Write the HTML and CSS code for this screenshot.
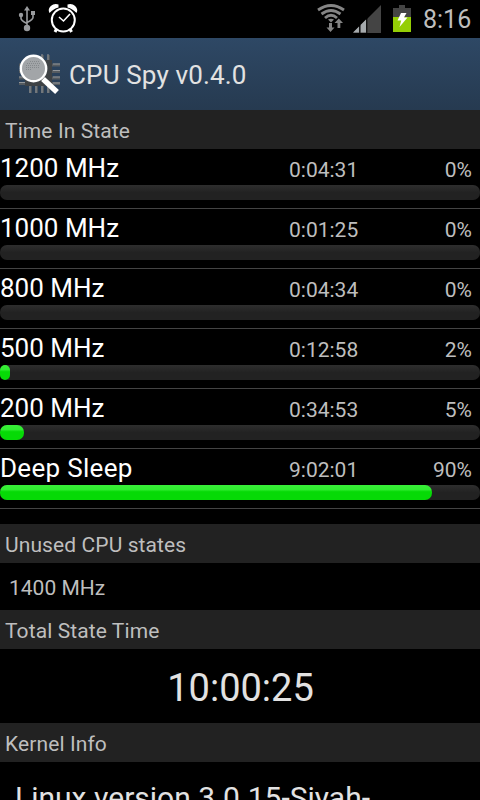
FILE: index.html
```html
<!DOCTYPE html>
<html lang="en">
<head>
    <meta charset="UTF-8">
    <meta name="viewport" content="width=device-width, initial-scale=1.0">
    <title>CPU Spy</title>
    <link rel="stylesheet" href="styles.css">
</head>
<body>
    <!-- Status bar -->
    <div class="status-bar">
        <svg class="icon-usb" width="18" height="26" viewBox="0 0 18 26">
            <g fill="none" stroke="#999b9e" stroke-width="1.600">
                <path d="M9 3v19M3 9v3.500q0 2 6 5M15 8v3.500q0 2-6 5"/>
            </g>
            <g fill="#999b9e">
                <path d="M9 0l3 4.500H6z"/>
                <circle cx="9" cy="22" r="3.200"/>
                <circle cx="3" cy="9" r="2.200"/>
                <path d="M13 5h4v4h-4z"/>
            </g>
        </svg>
        <svg class="icon-alarm" width="30" height="30" viewBox="0 0 30 30">
            <g fill="none" stroke="#fff">
                <circle cx="15.300" cy="17" r="11.500" stroke-width="2"/>
                <path d="M11 14l4.500 4 6.500-7" stroke-width="1.600"/>
                <path d="M8.500 26l-1.500 3M22 26l1.500 3" stroke-width="3"/>
            </g>
            <g fill="#fff">
                <path d="M1.500 10C-1.500 5 5-1 10.500 1.500V4.500C7 5.500 4.500 7 1.500 10z"/>
                <path d="M28.500 10c3-5-3.500-11-9-8.500V4.500c3.500 1 6 2.500 9 5.500z"/>
            </g>
        </svg>
        <span class="spacer"></span>
        <svg class="icon-wifi" width="28" height="29" viewBox="0 0 28 29">
            <g fill="none" stroke="#858585" stroke-width="2.800">
                <path d="M1 6Q14-3 27 6"/>
                <path d="M4.500 10Q14 3 23.500 10"/>
                <path d="M8 14Q14 8.500 20 14"/>
            </g>
            <g fill="#858585">
                <path d="M11 15.500q3-1.500 6 0L14 18.500z"/>
                <path d="M12 19h3v4.500h2.500l-4 4.500-4-4.500H12zM20.500 24v-5H17.500l4.300-4.500 4.200 4.500h-2.700v5z"/>
            </g>
        </svg>
        <svg class="icon-signal" width="28" height="28" viewBox="0 0 28 28">
            <path fill="#444" d="M0 28L28 0v28z"/>
            <path fill="#a5aaad" d="M0 27.500L6 21.500v6zM7.500 20L13 14.500v13H7.500z"/>
            <path stroke="#000" d="M6.800 20v8M13.800 13v15"/>
        </svg>
        <svg class="icon-battery" width="18" height="27" viewBox="0 0 18 27">
            <path fill="#444" d="M6 0h6v3h6v9H0V3h6z"/>
            <path fill="#94ce05" d="M0 12h18v15H0z"/>
            <path fill="#fff" d="M8 8h5.500L11 12.500h3.500L6.500 22l1.700-6.500H4.500z"/>
        </svg>
        <span class="clock">8:16</span>
    </div>

    <!-- Action bar -->
    <div class="action-bar">
        <svg class="app-icon" width="44" height="44" viewBox="0 0 44 44">
            <path fill="none" stroke="#555b60" stroke-width="2.800" d="M13.500 3v38M19.500 3v38M25.500 3v38M31.500 3v38M2 13h41M2 19.500h41M2 26h41M2 31.500h41"/>
            <path fill="none" stroke="#92969a" d="M31 2v6M25 2v6M36 12h7M36 18.500h7M36 25h7M36 31h7M2 30.500h8M2 25h6M13 34v7M19 34v7M25 34v7M31 34v7"/>
            <path fill="#3e4245" d="M8 8h27v26H8z"/>
            <path stroke="#fff" stroke-width="5.500" d="M26 27l14 13"/>
            <circle cx="16.500" cy="16.500" r="12.700" fill="#a2a5a8" stroke="#fff" stroke-width="2.400"/>
            <path fill="none" stroke="#85898c" stroke-dasharray="1 1" d="M13 9.500h9M10 11.500h13M9 13.500h14M9 15.500h13M9 17.500h6"/>
        </svg>
        <h1>CPU Spy v0.4.0</h1>
    </div>

    <h2>Time In State</h2>
    <div class="state-list">
        <div class="state">
            <div class="state-info"><span class="name">1200 MHz</span><span class="time">0:04:31</span><span class="percent">0%</span></div>
            <div class="bar"></div>
        </div>
        <div class="state">
            <div class="state-info"><span class="name">1000 MHz</span><span class="time">0:01:25</span><span class="percent">0%</span></div>
            <div class="bar"></div>
        </div>
        <div class="state">
            <div class="state-info"><span class="name">800 MHz</span><span class="time">0:04:34</span><span class="percent">0%</span></div>
            <div class="bar"></div>
        </div>
        <div class="state">
            <div class="state-info"><span class="name">500 MHz</span><span class="time">0:12:58</span><span class="percent">2%</span></div>
            <div class="bar"><div class="fill" style="width: 2%"></div></div>
        </div>
        <div class="state">
            <div class="state-info"><span class="name">200 MHz</span><span class="time">0:34:53</span><span class="percent">5%</span></div>
            <div class="bar"><div class="fill" style="width: 5%"></div></div>
        </div>
        <div class="state">
            <div class="state-info"><span class="name deep-sleep">Deep Sleep</span><span class="time">9:02:01</span><span class="percent">90%</span></div>
            <div class="bar"><div class="fill" style="width: 90%"></div></div>
        </div>
    </div>

    <h2>Unused CPU states</h2>
    <p class="unused">1400 MHz</p>

    <h2>Total State Time</h2>
    <p class="total">10:00:25</p>

    <h2>Kernel Info</h2>
    <p class="kernel">Linux version 3.0.15-Siyah-</p>
</body>
</html>
```
FILE: styles.css
```css
* {
    box-sizing: border-box;
}

body {
    font-family: Roboto, sans-serif;
    background-color: #000;
    color: #e2e2e2;
    margin: 0;
    height: 800px;
    overflow: hidden;
}

h1, h2, p {
    margin: 0;
    font-weight: normal;
    white-space: nowrap;
}

svg {
    display: block;
    flex: none;
}

/* Status bar */
.status-bar {
    display: flex;
    align-items: flex-start;
    height: 38px;
    padding: 3px 10px 0 18px;
}

.icon-usb {
    margin-top: 3px;
}

.icon-alarm {
    margin-left: 12px;
}

.spacer {
    flex: 1;
}

.icon-wifi {
    margin: 1px 8px 0 0;
}

.icon-signal {
    margin: 2px 12px 0 0;
}

.icon-battery {
    margin: 2px 12px 0 0;
}

.clock {
    width: 47px;
    font-size: 25px;
    line-height: 34px;
    color: #bebebe;
}

/* Action bar */
.action-bar {
    display: flex;
    align-items: center;
    height: 72px;
    padding-left: 17px;
    background: linear-gradient(#2e4865, #263a50);
}

.action-bar h1 {
    margin-left: 8px;
    padding-top: 2px;
    font-size: 26px;
    letter-spacing: 0.15px;
}

h2 {
    height: 39px;
    padding: 2px 5px 0;
    font-size: 21px;
    line-height: 39px;
    letter-spacing: 0.1px;
    color: #bebebe;
    background-color: #222;
}

/* CPU states */
.state-list {
    margin-bottom: 15px;
}

.state {
    height: 60px;
    border-bottom: 1px solid #444;
}

.state-info {
    display: grid;
    grid-template-columns: 289px 1fr auto;
    height: 36px;
    padding-right: 8px;
    line-height: 39px;
    font-size: 21px;
    color: #bebebe;
}

.name {
    font-size: 26px;
    color: #fff;
}

.deep-sleep {
    letter-spacing: 0.3px;
}

.time,
.percent {
    padding-top: 2px;
}

.bar {
    height: 15px;
    border-radius: 7px;
    background: linear-gradient(#2e2e2e, #222 50%);
}

.fill {
    height: 15px;
    border-radius: 7px;
    background: linear-gradient(#39ee39 0, #30ed30 30%, #06da06 45%);
}

.unused {
    height: 47px;
    padding: 2px 9px 0;
    font-size: 21px;
    line-height: 47px;
    color: #bebebe;
}

.total {
    height: 74px;
    padding: 2px 0 0 1px;
    text-align: center;
    font-size: 38px;
    line-height: 74px;
}

.kernel {
    padding: 15px 15px 0;
    font-size: 30px;
    line-height: 42px;
}
```
